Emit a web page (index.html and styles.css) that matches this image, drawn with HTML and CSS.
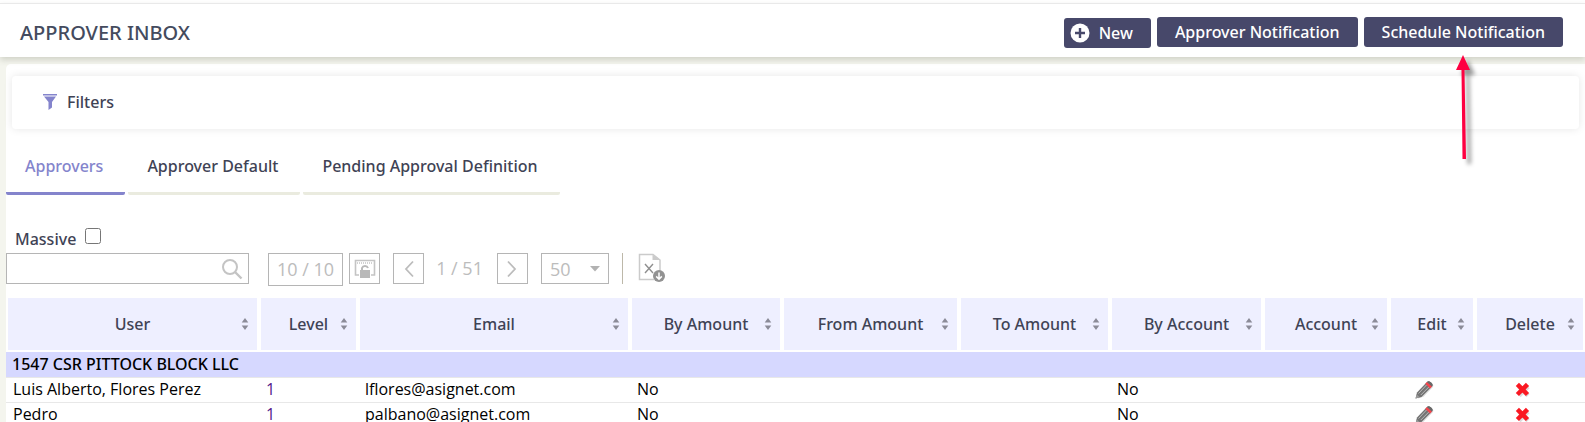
FILE: index.html
```
<!DOCTYPE html>
<html lang="en">
<head>
<meta charset="utf-8">
<title>Approver Inbox</title>
<link rel="stylesheet" href="styles.css">
</head>
<body>
<svg class="defs" aria-hidden="true">
  <symbol id="sort" viewBox="0 0 8 14"><path d="M4 1L7.300 5.500H.7zM4 13L.7 8.500h6.600z" fill="#8b8b98"/></symbol>
  <symbol id="pencil" viewBox="0 0 20 20">
    <path d="M2 17.500l1.500-5.500L13 2.500q1.500-1.500 3.300.2T17 6L7.500 15.800z" transform="translate(1 1)" fill="#ddd"/>
    <path d="M.5 18.500L2 12.500 12 2q1.500-1.500 4 .5t1 4L6.500 17z" fill="#747474"/>
    <path d="M.5 18.500l1.200-4.300 3 3z" fill="#999"/>
    <path d="M3.500 13.500L11.500 5M5.800 15L14 6.800" stroke="#b9b9b9" fill="none"/>
    <path d="M10.300 3.800l1.700-1.800 5 4.500-1.900 1.900z" fill="#f8444c"/>
    <path d="M12 2q1.500-1.500 4 .5t1 4z" fill="#686868"/>
  </symbol>
  <symbol id="cross" viewBox="0 0 16 16">
    <path d="M4.500 5l8 8m0-8l-8 8" stroke="#ddd" stroke-width="4"/>
    <path d="M3 3l9 9m0-9l-9 9" stroke="#fa1822" stroke-width="4"/>
  </symbol>
</svg>

<header class="topbar">
  <h1>APPROVER INBOX</h1>
  <div class="actions">
    <button class="btn btn-new" type="button">
      <svg width="20" height="20" viewBox="0 0 20 20"><circle cx="10" cy="10" r="9.500" fill="#fff"/><path d="M10 5v10M5 10h10" stroke="#47486a" stroke-width="2.400"/></svg>
      New
    </button>
    <button class="btn" type="button">Approver Notification</button>
    <button class="btn" type="button">Schedule Notification
      <svg class="arrow" width="24" height="114" viewBox="0 0 24 114" aria-hidden="true"><path d="M8 0l7 15H9.500L11 104H7.500L6.500 15H1z" fill="#fe0041"/></svg>
    </button>
  </div>
</header>

<main class="panel">
  <section class="filters">
    <svg width="14" height="16" viewBox="0 0 14 16"><path d="M0 0h14v1.500H0zM1 2.500h12L9 8v5.500L5.500 16V8z" fill="#8484cc"/></svg>
    <span>Filters</span>
  </section>

  <nav class="tabs">
    <a class="tab active" href="#approvers">Approvers</a>
    <a class="tab" href="#default">Approver Default</a>
    <a class="tab" href="#pending">Pending Approval Definition</a>
  </nav>

  <div class="massive">
    <label for="massive">Massive</label>
    <input id="massive" type="checkbox">
  </div>

  <div class="toolbar">
    <div class="search">
      <input type="text" aria-label="Search">
      <button type="button" aria-label="Search"><svg width="22" height="22" viewBox="0 0 22 22" fill="none" stroke="#c4c4c4"><circle cx="9" cy="9" r="7" stroke-width="2"/><path d="M14 14l6.500 6.500" stroke-width="2.400"/></svg></button>
    </div>
    <span class="count">10 / 10</span>
    <button class="tool" type="button" aria-label="Lock columns"><svg width="22" height="20" viewBox="0 0 22 20"><path d="M5 16H1.500V1.500h19V16H17" fill="none" stroke="#c4c4c4" stroke-width="1.600"/><path d="M3 4h16" stroke="#c4c4c4" stroke-width="1.500" stroke-dasharray="1 1"/><path d="M8 11V9a3.200 3.200 0 0 1 6 0" fill="none" stroke="#b9b9b9" stroke-width="2"/><path d="M6 11h10v8H6z" fill="#b9b9b9"/></svg></button>
    <button class="tool prev" type="button" aria-label="Previous page"><svg width="10" height="18" viewBox="0 0 10 18"><path d="M9 1.500L2 9l7 7.500" fill="none" stroke="#bcbcbc" stroke-width="1.800"/></svg></button>
    <span class="pages">1 / 51</span>
    <button class="tool next" type="button" aria-label="Next page"><svg width="10" height="18" viewBox="0 0 10 18"><path d="M1 1.500L8 9l-7 7.500" fill="none" stroke="#bcbcbc" stroke-width="1.800"/></svg></button>
    <div class="size">
      <select aria-label="Rows per page"><option>50</option></select>
      <svg width="10" height="6" viewBox="0 0 10 6"><path d="M0 0h10L5 5.500z" fill="#b2b2b2"/></svg>
    </div>
    <span class="divider"></span>
    <button class="export" type="button" aria-label="Export to Excel"><svg width="28" height="30" viewBox="0 0 28 30"><path d="M16 26.500H1.500v-25H15L22 7v11" fill="none" stroke="#cbcbcb" stroke-width="1.500"/><path d="M14.500 1.500V7H22z" fill="#cbcbcb"/><path d="M7 11l8 9m0-9l-8 9" stroke="#8f8f8f" stroke-width="1.400"/><circle cx="21" cy="23" r="6" fill="#929292"/><path d="M21 19.500v6.500m-2.800-2.600L21 26.200l2.800-2.800" fill="none" stroke="#fff" stroke-width="1.500"/></svg></button>
  </div>

  <table class="grid">
    <colgroup><col class="c-user"><col class="c-level"><col class="c-email"><col class="c-byamt"><col class="c-from"><col class="c-to"><col class="c-byacc"><col class="c-acc"><col class="c-edit"><col class="c-del"></colgroup>
    <thead>
      <tr>
        <th><div>User<svg><use href="#sort"/></svg></div></th>
        <th><div>Level<svg><use href="#sort"/></svg></div></th>
        <th><div>Email<svg><use href="#sort"/></svg></div></th>
        <th><div>By Amount<svg><use href="#sort"/></svg></div></th>
        <th><div>From Amount<svg><use href="#sort"/></svg></div></th>
        <th><div>To Amount<svg><use href="#sort"/></svg></div></th>
        <th><div>By Account<svg><use href="#sort"/></svg></div></th>
        <th><div>Account<svg><use href="#sort"/></svg></div></th>
        <th><div>Edit<svg><use href="#sort"/></svg></div></th>
        <th><div>Delete<svg><use href="#sort"/></svg></div></th>
      </tr>
    </thead>
    <tbody>
      <tr class="group"><td colspan="10">1547 CSR PITTOCK BLOCK LLC</td></tr>
      <tr>
        <td>Luis Alberto, Flores Perez</td><td><a href="#level">1</a></td><td>lflores@asignet.com</td><td>No</td><td></td><td></td><td>No</td><td></td>
        <td class="icon"><button type="button" aria-label="Edit"><svg><use href="#pencil"/></svg></button></td>
        <td class="icon del"><button type="button" aria-label="Delete"><svg><use href="#cross"/></svg></button></td>
      </tr>
      <tr>
        <td>Pedro</td><td><a href="#level">1</a></td><td>palbano@asignet.com</td><td>No</td><td></td><td></td><td>No</td><td></td>
        <td class="icon"><button type="button" aria-label="Edit"><svg><use href="#pencil"/></svg></button></td>
        <td class="icon del"><button type="button" aria-label="Delete"><svg><use href="#cross"/></svg></button></td>
      </tr>
    </tbody>
  </table>
</main>
</body>
</html>
```
FILE: styles.css
```
* { box-sizing: border-box; }
html { overflow: hidden; }
body {
  margin: 0;
  padding-top: 3px;
  background: linear-gradient(#fff 0 3px, #f4f5ee 3px);
  color: #3f4355;
  font: 500 16px/22px "Noto Sans", "Open Sans", sans-serif;
}
button, input, select { font: inherit; color: inherit; }
button { padding: 0; border: 0; background: none; }
svg { display: block; flex: none; }
.defs { position: absolute; width: 0; height: 0; }

.topbar {
  position: relative;
  z-index: 1;
  display: flex;
  justify-content: space-between;
  height: 54px;
  padding: 13px 22px 0 20px;
  border-top: 1px solid #e9e9e9;
  background: #fff;
  box-shadow: 0 3px 6px rgba(70, 75, 50, .2);
}
h1 { margin: 0; font-size: 20px; line-height: 32px; font-weight: 500; color: #444b5e; }
.actions { display: flex; gap: 6px; align-items: flex-start; }
.btn {
  position: relative;
  display: flex;
  align-items: center;
  height: 30px;
  padding: 0 18px;
  border-radius: 3px;
  background: #47486a;
  color: #fff;
}
.btn-new { gap: 9px; margin-top: 1px; padding: 0 18px 0 6px; }
.arrow {
  position: absolute;
  left: 91px;
  top: 38px;
  overflow: visible;
  filter: drop-shadow(5px 5px 2px rgba(0, 0, 0, .4));
}

.panel { margin: 7px 0 0 6px; padding-top: 12px; border-radius: 5px 0 0; background: #fff; }
.filters {
  display: flex;
  align-items: center;
  gap: 10px;
  height: 53px;
  margin: 0 6px;
  padding: 0 0 2px 31px;
  border-radius: 4px;
  box-shadow: 0 0 8px rgba(0, 0, 0, .1);
}

.tabs { display: flex; gap: 3px; padding-top: 14px; }
.tab {
  padding: 12px 22px 15px 19px;
  border-bottom: 3px solid #eaebdf;
  border-radius: 2px;
  color: inherit;
  text-decoration: none;
}
.tab.active { color: #8484cc; border-color: #8484cc; }

.massive { display: flex; gap: 9px; padding: 32px 0 0 9px; height: 58px; }
.massive label { line-height: 24px; }
.massive input { width: 16px; height: 16px; margin: 1px 0 0; }

.toolbar { display: flex; align-items: flex-start; height: 45px; font-family: "Open Sans", sans-serif; font-size: 18px; font-weight: 400; color: #bcbcbc; }
.search { display: flex; align-items: center; width: 243px; height: 31px; padding-right: 5px; border: 1px solid #b5b5b5; }
.search input { flex: 1; min-width: 0; height: 29px; padding: 0 8px; border: 0; outline: 0; background: none; color: #3f4355; }
.count { margin: 0 6px 0 19px; padding: 0 8px; border: 1px solid #b5b5b5; line-height: 31px; }
.tool { display: flex; align-items: center; justify-content: center; width: 31px; height: 31px; border: 1px solid #b5b5b5; }
.prev { margin-left: 13px; }
.pages { padding: 0 14px 0 12px; line-height: 30px; }
.size { position: relative; width: 68px; height: 31px; margin: 0 13px; }
.size select { width: 100%; height: 100%; padding: 0 8px; border: 1px solid #b5b5b5; border-radius: 0; background: none; appearance: none; }
.size svg { position: absolute; right: 9px; top: 13px; pointer-events: none; }
.divider { width: 1px; height: 31px; margin-right: 15px; background: #bdb8a9; }

.grid { width: 100%; table-layout: fixed; border-collapse: collapse; font-family: "Open Sans", sans-serif; font-weight: 400; color: #000; }
.c-user { width: 253px; }
.c-level { width: 99px; }
.c-email { width: 272px; }
.c-byamt { width: 152px; }
.c-from { width: 177px; }
.c-to { width: 151px; }
.c-byacc { width: 153px; }
.c-acc { width: 126px; }
.c-edit { width: 86px; }
.c-del { width: 110px; }
.grid th { padding: 0 2px 2px; font-family: "Noto Sans", "Open Sans", sans-serif; font-weight: 500; color: #3f4355; }
.grid th div { position: relative; height: 52px; line-height: 52px; background: #eeefff; }
.grid th svg { position: absolute; right: 8px; top: 19px; width: 8px; height: 14px; }
.grid td { height: 25px; padding: 0 7px 2px; line-height: 22px; border-bottom: 1px solid #e8e8e8; white-space: nowrap; }
.grid td a { color: #551a8b; text-decoration: none; }
.grid .group td { padding: 0 6px; background: #d6d8ff; font-family: "Noto Sans", "Open Sans", sans-serif; font-weight: 500; }
.grid .icon { padding: 0 26px; }
.grid .icon button { display: block; }
.grid .icon svg { width: 20px; height: 20px; }
.grid .del { padding: 0 39px; }
.grid .del svg { width: 18px; height: 18px; }
```
